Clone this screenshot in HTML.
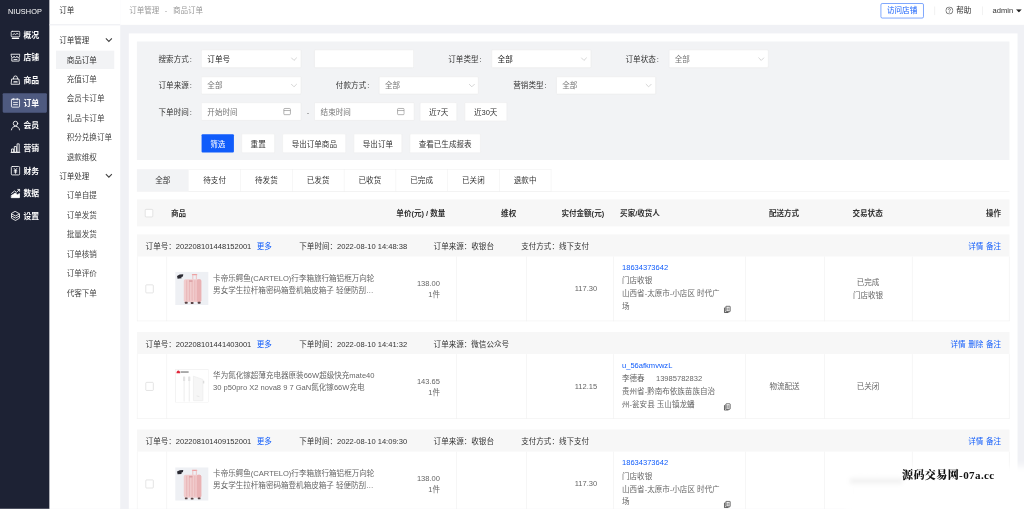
<!DOCTYPE html>
<html lang="zh-CN"><head><meta charset="utf-8"><title>商品订单</title>
<style>
html,body{margin:0;padding:0}
body{width:1024px;height:509px;overflow:hidden;background:#f0f1f5}
#root{filter:saturate(1.001);position:absolute;left:0;top:0;width:1900px;height:945px;transform:scale(0.53895);transform-origin:0 0;font-family:"Liberation Sans","Noto Sans CJK SC",sans-serif;font-size:14px;color:#333;overflow:hidden}
.a{position:absolute;display:block}
.t{white-space:nowrap}
</style></head><body><div id="root">
<div class="a " style="left:0.0px;top:0.0px;width:92.03px;height:944.43px;background:#1d2234"></div>
<div class="a t " style="left:-153.61px;width:400px;text-align:center;top:12.08px;line-height:20px;color:#fff;font-size:13.6px;letter-spacing:.2px">NIUSHOP</div>
<svg class="a" style="left:18.74px;top:55.34px" width="19.5" height="19.5" viewBox="0 0 16 16" fill="none" stroke="#fff" stroke-width="1.300" stroke-linejoin="round" stroke-linecap="round"><rect x="1.400" y="2.600" width="13.200" height="8.400" rx="1.500"/><path d="M4 7.400l2.200-1.200 2 1.200 2-1.600 1.800.800"/><path d="M3.200 13.300h9.600" stroke-width="1.800"/></svg>
<div class="a t " style="left:43.42px;top:54.94px;line-height:20px;color:#fff;font-weight:700;font-size:14.5px">概况</div>
<svg class="a" style="left:18.74px;top:97.32px" width="19.5" height="19.5" viewBox="0 0 16 16" fill="none" stroke="#fff" stroke-width="1.300" stroke-linejoin="round" stroke-linecap="round"><path d="M1.600 3h12.800v3a2.130 2 0 0 1-4.270 0 2.130 2 0 0 1-4.260 0 2.130 2 0 0 1-4.270 0z"/><path d="M2.400 8.600v4.800h11.200V8.600"/><path d="M5.600 11h4.800"/></svg>
<div class="a t " style="left:43.42px;top:96.92px;line-height:20px;color:#fff;font-weight:700;font-size:14.5px">店铺</div>
<svg class="a" style="left:18.74px;top:139.30px" width="19.5" height="19.5" viewBox="0 0 16 16" fill="none" stroke="#fff" stroke-width="1.300" stroke-linejoin="round" stroke-linecap="round"><path d="M2.800 6.200h10.400l1 8H1.800z"/><path d="M5 6V4.600a3 3 0 0 1 6 0V6"/><path d="M5.600 10.600h4.800" stroke-width="2"/></svg>
<div class="a t " style="left:43.42px;top:138.90px;line-height:20px;color:#fff;font-weight:700;font-size:14.5px">商品</div>
<div class="a " style="left:5.1px;top:172.56px;width:81.92px;height:36.37px;background:#4e5a80;border-radius:2px"></div>
<svg class="a" style="left:18.74px;top:181.28px" width="19.5" height="19.5" viewBox="0 0 16 16" fill="none" stroke="#fff" stroke-width="1.300" stroke-linejoin="round" stroke-linecap="round"><rect x="1.800" y="2.600" width="12.400" height="12" rx="1.200"/><path d="M5.400 1.200v2.400M10.600 1.200v2.400M5 7.400h6M5 10.800h6"/></svg>
<div class="a t " style="left:43.42px;top:180.88px;line-height:20px;color:#fff;font-weight:700;font-size:14.5px">订单</div>
<svg class="a" style="left:18.74px;top:223.26px" width="19.5" height="19.5" viewBox="0 0 16 16" fill="none" stroke="#fff" stroke-width="1.300" stroke-linejoin="round" stroke-linecap="round"><circle cx="8" cy="5" r="3.400"/><path d="M1.800 14.800c.6-3.400 2.800-5.400 6.200-5.400s5.600 2 6.200 5.400"/></svg>
<div class="a t " style="left:43.42px;top:222.86px;line-height:20px;color:#fff;font-weight:700;font-size:14.5px">会员</div>
<svg class="a" style="left:18.74px;top:265.24px" width="19.5" height="19.5" viewBox="0 0 16 16" fill="none" stroke="#fff" stroke-width="1.300" stroke-linejoin="round" stroke-linecap="round"><path d="M1 14.600h14"/><rect x="2.600" y="9.400" width="2.600" height="5"/><rect x="6.800" y="5.600" width="2.600" height="8.800"/><rect x="11" y="1.600" width="2.600" height="12.800"/></svg>
<div class="a t " style="left:43.42px;top:264.84px;line-height:20px;color:#fff;font-weight:700;font-size:14.5px">营销</div>
<svg class="a" style="left:18.74px;top:307.22px" width="19.5" height="19.5" viewBox="0 0 16 16" fill="none" stroke="#fff" stroke-width="1.300" stroke-linejoin="round" stroke-linecap="round"><rect x="1.600" y="1.600" width="12.800" height="12.800" rx="1.600"/><path d="M6 4.600l2 2.600 2-2.600M8 7.200V12M6 8h4M6 10h4" stroke-width="1.300"/></svg>
<div class="a t " style="left:43.42px;top:306.82px;line-height:20px;color:#fff;font-weight:700;font-size:14.5px">财务</div>
<svg class="a" style="left:18.74px;top:349.20px" width="19.5" height="19.5" viewBox="0 0 16 16" fill="none" stroke="#fff" stroke-width="1.300" stroke-linejoin="round" stroke-linecap="round"><path d="M2 14.600h12V8.200l-3 2.200-3-3-6 3.800z" fill="#fff"/><path d="M2 8l4.600-3.600 3 2L14 2.400"/><path d="M11.400 2h3v3" /></svg>
<div class="a t " style="left:43.42px;top:348.80px;line-height:20px;color:#fff;font-weight:700;font-size:14.5px">数据</div>
<svg class="a" style="left:18.74px;top:391.18px" width="19.5" height="19.5" viewBox="0 0 16 16" fill="none" stroke="#fff" stroke-width="1.300" stroke-linejoin="round" stroke-linecap="round"><path d="M8 1.200l6 3.400v6.800l-6 3.400-6-3.400V4.600z"/><path d="M2.400 5l5.600 3 5.600-3M2.400 8.200l5.600 3 5.600-3" stroke-width="1.300"/></svg>
<div class="a t " style="left:43.42px;top:390.78px;line-height:20px;color:#fff;font-weight:700;font-size:14.5px">设置</div>
<div class="a " style="left:92.03px;top:0.0px;width:131.18px;height:944.43px;background:#fff"></div>
<div class="a " style="left:92.03px;top:45.46px;width:131.18px;height:1.11px;background:#eceef2"></div>
<div class="a t " style="left:109.84px;top:9.67px;line-height:20px;color:#333;font-size:14px">订单</div>
<div class="a t " style="left:109.84px;top:64.59px;line-height:20px;color:#333">订单管理</div>
<svg class="a" style="left:195.06px;top:66.85px" width="14" height="14" viewBox="0 0 10 10" fill="none" stroke="#444" stroke-width="1.5"><path d="M1 3l4 4 4-4"/></svg>
<div class="a " style="left:103.91px;top:94.26px;width:108.36px;height:33.77px;background:#f2f3f5"></div>
<div class="a t " style="left:123.76px;top:101.33px;line-height:20px;color:#333">商品订单</div>
<div class="a t " style="left:123.76px;top:137.32px;line-height:20px;color:#454545">充值订单</div>
<div class="a t " style="left:123.76px;top:172.95px;line-height:20px;color:#454545">会员卡订单</div>
<div class="a t " style="left:123.76px;top:208.76px;line-height:20px;color:#454545">礼品卡订单</div>
<div class="a t " style="left:123.76px;top:244.94px;line-height:20px;color:#454545">积分兑换订单</div>
<div class="a t " style="left:123.76px;top:280.94px;line-height:20px;color:#454545">退款维权</div>
<div class="a t " style="left:109.84px;top:316.93px;line-height:20px;color:#333">订单处理</div>
<svg class="a" style="left:195.06px;top:319.19px" width="14" height="14" viewBox="0 0 10 10" fill="none" stroke="#444" stroke-width="1.5"><path d="M1 3l4 4 4-4"/></svg>
<div class="a t " style="left:123.76px;top:352.93px;line-height:20px;color:#454545">订单自提</div>
<div class="a t " style="left:123.76px;top:389.11px;line-height:20px;color:#454545">订单发货</div>
<div class="a t " style="left:123.76px;top:425.29px;line-height:20px;color:#454545">批量发货</div>
<div class="a t " style="left:123.76px;top:461.47px;line-height:20px;color:#454545">订单核销</div>
<div class="a t " style="left:123.76px;top:497.65px;line-height:20px;color:#454545">订单评价</div>
<div class="a t " style="left:123.76px;top:533.84px;line-height:20px;color:#454545">代客下单</div>
<div class="a " style="left:223.21px;top:0.0px;width:1676.78px;height:46.2px;background:#fff"></div>
<div class="a t " style="left:239.73px;top:9.67px;line-height:20px;color:#999">订单管理<span style="margin:0 10.500px 0 10px">-</span>商品订单</div>
<div class="a " style="left:1633.55px;top:5.94px;width:80.53px;height:28.2px;border:1.500px solid #105cfb;border-radius:3px;box-sizing:border-box"></div>
<div class="a t " style="left:1473.81px;width:400px;text-align:center;top:9.85px;line-height:20px;color:#105cfb">访问店铺</div>
<div class="a " style="left:1733.74px;top:12.06px;width:0.93px;height:15.77px;background:#e6e6e6"></div>
<svg class="a" style="left:1753.97px;top:11.80px" width="15" height="15" viewBox="0 0 15 15" fill="none" stroke="#333" stroke-width="1.150"><circle cx="7.500" cy="7.500" r="6.500"/><path d="M5.500 6a2 2 0 1 1 3 1.700c-.7.400-1 .8-1 1.600" /><path d="M7.500 10.600v1.200"/></svg>
<div class="a t " style="left:1774.38px;top:9.85px;line-height:20px;color:#333">帮助</div>
<div class="a " style="left:1822.25px;top:12.06px;width:0.93px;height:15.77px;background:#e6e6e6"></div>
<div class="a t " style="left:1841.73px;top:9.67px;line-height:20px;color:#333">admin</div>
<svg class="a" style="left:1884.78px;top:17.04px" width="11" height="6" viewBox="0 0 11 6"><path d="M0 0h11L5.500 6z" fill="#222"/></svg>
<div class="a" style="left:223.58px;top:45.46px;width:1676.41px;height:898.97px;background:#f0f1f5;z-index:-1"></div>
<div class="a " style="left:239.35px;top:61.6px;width:1648.76px;height:882.83px;background:#fff"></div>
<div class="a " style="left:254.2px;top:77.0px;width:1618.52px;height:220.24px;background:#f2f3f5"></div>
<div class="a t " style="left:-43.00999999999999px;width:400px;text-align:right;top:100.12px;line-height:20px;color:#333;letter-spacing:.15px">搜索方式<span style="margin-left:1.500px;letter-spacing:1px">:</span></div>
<div class="a " style="left:373.34px;top:91.96px;width:185.69px;height:34.1px;background:#fff;border:1px solid #e9e9e9;box-sizing:border-box;border-radius:2px"></div>
<div class="a t " style="left:384.73px;top:100.12px;line-height:20px;color:#222">订单号</div>
<svg class="a" style="left:539.28px;top:102.88px" width="13" height="13" viewBox="0 0 10 10" fill="none" stroke="#c9c9c9" stroke-width="1.1"><path d="M1 3l4 4 4-4"/></svg>
<div class="a " style="left:583.47px;top:91.96px;width:184.4px;height:34.1px;background:#fff;border:1px solid #e9e9e9;box-sizing:border-box;border-radius:2px"></div>
<div class="a t " style="left:494.52px;width:400px;text-align:right;top:100.12px;line-height:20px;color:#333;letter-spacing:.15px">订单类型<span style="margin-left:1.500px;letter-spacing:1px">:</span></div>
<div class="a " style="left:911.88px;top:91.96px;width:185.32px;height:34.1px;background:#fff;border:1px solid #e9e9e9;box-sizing:border-box;border-radius:2px"></div>
<div class="a t " style="left:923.28px;top:100.12px;line-height:20px;color:#222">全部</div>
<svg class="a" style="left:1077.46px;top:102.88px" width="13" height="13" viewBox="0 0 10 10" fill="none" stroke="#c9c9c9" stroke-width="1.1"><path d="M1 3l4 4 4-4"/></svg>
<div class="a t " style="left:823.49px;width:400px;text-align:right;top:100.12px;line-height:20px;color:#333;letter-spacing:.15px">订单状态<span style="margin-left:1.500px;letter-spacing:1px">:</span></div>
<div class="a " style="left:1240.67px;top:91.96px;width:185.32px;height:34.1px;background:#fff;border:1px solid #e9e9e9;box-sizing:border-box;border-radius:2px"></div>
<div class="a t " style="left:1252.06px;top:100.12px;line-height:20px;color:#757575">全部</div>
<svg class="a" style="left:1406.25px;top:102.88px" width="13" height="13" viewBox="0 0 10 10" fill="none" stroke="#c9c9c9" stroke-width="1.1"><path d="M1 3l4 4 4-4"/></svg>
<div class="a t " style="left:-43.00999999999999px;width:400px;text-align:right;top:148.55px;line-height:20px;color:#333;letter-spacing:.15px">订单来源<span style="margin-left:1.500px;letter-spacing:1px">:</span></div>
<div class="a " style="left:373.34px;top:141.5px;width:185.69px;height:33.73px;background:#fff;border:1px solid #e9e9e9;box-sizing:border-box;border-radius:2px"></div>
<div class="a t " style="left:384.73px;top:148.55px;line-height:20px;color:#757575">全部</div>
<svg class="a" style="left:539.28px;top:152.23px" width="13" height="13" viewBox="0 0 10 10" fill="none" stroke="#c9c9c9" stroke-width="1.1"><path d="M1 3l4 4 4-4"/></svg>
<div class="a t " style="left:286.15px;width:400px;text-align:right;top:148.55px;line-height:20px;color:#333;letter-spacing:.15px">付款方式<span style="margin-left:1.500px;letter-spacing:1px">:</span></div>
<div class="a " style="left:702.77px;top:141.5px;width:185.69px;height:33.73px;background:#fff;border:1px solid #e9e9e9;box-sizing:border-box;border-radius:2px"></div>
<div class="a t " style="left:714.17px;top:148.55px;line-height:20px;color:#757575">全部</div>
<svg class="a" style="left:868.72px;top:152.23px" width="13" height="13" viewBox="0 0 10 10" fill="none" stroke="#c9c9c9" stroke-width="1.1"><path d="M1 3l4 4 4-4"/></svg>
<div class="a t " style="left:615.12px;width:400px;text-align:right;top:148.55px;line-height:20px;color:#333;letter-spacing:.15px">营销类型<span style="margin-left:1.500px;letter-spacing:1px">:</span></div>
<div class="a " style="left:1031.75px;top:141.5px;width:185.32px;height:33.73px;background:#fff;border:1px solid #e9e9e9;box-sizing:border-box;border-radius:2px"></div>
<div class="a t " style="left:1043.14px;top:148.55px;line-height:20px;color:#757575">全部</div>
<svg class="a" style="left:1197.32px;top:152.23px" width="13" height="13" viewBox="0 0 10 10" fill="none" stroke="#c9c9c9" stroke-width="1.1"><path d="M1 3l4 4 4-4"/></svg>
<div class="a t " style="left:-43.00999999999999px;width:400px;text-align:right;top:198.18px;line-height:20px;color:#333;letter-spacing:.15px">下单时间<span style="margin-left:1.500px;letter-spacing:1px">:</span></div>
<div class="a " style="left:373.34px;top:190.11px;width:185.69px;height:33.92px;background:#fff;border:1px solid #e9e9e9;box-sizing:border-box;border-radius:2px"></div>
<div class="a t " style="left:384.73px;top:198.18px;line-height:20px;color:#757575">开始时间</div>
<svg class="a" style="left:525.37px;top:199.47px" width="15.5" height="15.5" viewBox="0 0 14 14" fill="none" stroke="#8a8a8a" stroke-width="1.100"><rect x="1.500" y="2" width="11" height="10.500" rx="1.500"/><path d="M1.500 5.500h11"/></svg>
<div class="a t " style="left:371.48px;width:400px;text-align:center;top:198.18px;line-height:20px;color:#666">-</div>
<div class="a " style="left:583.47px;top:190.11px;width:185.69px;height:33.92px;background:#fff;border:1px solid #e9e9e9;box-sizing:border-box;border-radius:2px"></div>
<div class="a t " style="left:594.86px;top:198.18px;line-height:20px;color:#757575">结束时间</div>
<svg class="a" style="left:735.5px;top:199.47px" width="15.5" height="15.5" viewBox="0 0 14 14" fill="none" stroke="#8a8a8a" stroke-width="1.100"><rect x="1.500" y="2" width="11" height="10.500" rx="1.500"/><path d="M1.500 5.500h11"/></svg>
<div class="a " style="left:779.11px;top:189.63px;width:69.21px;height:34.88px;background:#fff;border:1px solid #ececec;box-sizing:border-box;border-radius:2px"></div>
<div class="a t " style="left:613.71px;width:400px;text-align:center;top:198.37px;line-height:20px;color:#333">近7天</div>
<div class="a " style="left:861.68px;top:189.63px;width:78.86px;height:34.88px;background:#fff;border:1px solid #ececec;box-sizing:border-box;border-radius:2px"></div>
<div class="a t " style="left:701.1px;width:400px;text-align:center;top:198.37px;line-height:20px;color:#333">近30天</div>
<div class="a " style="left:373.88px;top:248.63px;width:60.3px;height:34.33px;background:#105cfb;border-radius:2px"></div>
<div class="a t " style="left:204.02999999999997px;width:400px;text-align:center;top:257.09px;line-height:20px;color:#fff">筛选</div>
<div class="a " style="left:447.91px;top:248.07px;width:62.16px;height:35.44px;background:#fff;border:1px solid #ececec;box-sizing:border-box;border-radius:2px"></div>
<div class="a t " style="left:278.99px;width:400px;text-align:center;top:257.09px;line-height:20px;color:#333">重置</div>
<div class="a " style="left:523.98px;top:248.07px;width:118.38px;height:35.44px;background:#fff;border:1px solid #ececec;box-sizing:border-box;border-radius:2px"></div>
<div class="a t " style="left:383.16999999999996px;width:400px;text-align:center;top:257.09px;line-height:20px;color:#333">导出订单商品</div>
<div class="a " style="left:656.09px;top:248.07px;width:90.18px;height:35.44px;background:#fff;border:1px solid #ececec;box-sizing:border-box;border-radius:2px"></div>
<div class="a t " style="left:501.17999999999995px;width:400px;text-align:center;top:257.09px;line-height:20px;color:#333">导出订单</div>
<div class="a " style="left:759.63px;top:248.07px;width:132.67px;height:35.44px;background:#fff;border:1px solid #ececec;box-sizing:border-box;border-radius:2px"></div>
<div class="a t " style="left:625.96px;width:400px;text-align:center;top:257.09px;line-height:20px;color:#333">查看已生成报表</div>
<div class="a " style="left:254.2px;top:354.76px;width:1618.52px;height:1.02px;background:#eee"></div>
<div class="a " style="left:254.2px;top:313.57px;width:96.02px;height:41.75px;background:#f2f3f5"></div>
<div class="a t " style="left:102.20999999999998px;width:400px;text-align:center;top:324.72px;line-height:20px;color:#333">全部</div>
<div class="a " style="left:350.22px;top:313.57px;width:96.58px;height:42.21px;border:1px solid #f0f0f0;border-left:0;box-sizing:border-box"></div>
<div class="a t " style="left:198.23000000000002px;width:400px;text-align:center;top:324.72px;line-height:20px;color:#333">待支付</div>
<div class="a " style="left:446.24px;top:313.57px;width:96.58px;height:42.21px;border:1px solid #f0f0f0;border-left:0;box-sizing:border-box"></div>
<div class="a t " style="left:294.25px;width:400px;text-align:center;top:324.72px;line-height:20px;color:#333">待发货</div>
<div class="a " style="left:542.26px;top:313.57px;width:96.58px;height:42.21px;border:1px solid #f0f0f0;border-left:0;box-sizing:border-box"></div>
<div class="a t " style="left:390.27px;width:400px;text-align:center;top:324.72px;line-height:20px;color:#333">已发货</div>
<div class="a " style="left:638.28px;top:313.57px;width:96.58px;height:42.21px;border:1px solid #f0f0f0;border-left:0;box-sizing:border-box"></div>
<div class="a t " style="left:486.28999999999996px;width:400px;text-align:center;top:324.72px;line-height:20px;color:#333">已收货</div>
<div class="a " style="left:734.3px;top:313.57px;width:96.58px;height:42.21px;border:1px solid #f0f0f0;border-left:0;box-sizing:border-box"></div>
<div class="a t " style="left:582.31px;width:400px;text-align:center;top:324.72px;line-height:20px;color:#333">已完成</div>
<div class="a " style="left:830.32px;top:313.57px;width:96.58px;height:42.21px;border:1px solid #f0f0f0;border-left:0;box-sizing:border-box"></div>
<div class="a t " style="left:678.33px;width:400px;text-align:center;top:324.72px;line-height:20px;color:#333">已关闭</div>
<div class="a " style="left:926.34px;top:313.57px;width:96.58px;height:42.21px;border:1px solid #f0f0f0;border-left:0;box-sizing:border-box"></div>
<div class="a t " style="left:774.35px;width:400px;text-align:center;top:324.72px;line-height:20px;color:#333">退款中</div>
<div class="a " style="left:254.2px;top:369.98px;width:1618.52px;height:50.28px;background:#f7f7f7"></div>
<div class="a " style="left:269.04px;top:387.88px;width:15.4px;height:15.4px;background:#fff;border:1px solid #cfcfcf;box-sizing:border-box;border-radius:2px"></div>
<div class="a t " style="left:317.1px;top:385.40px;line-height:20px;color:#333;font-weight:700">商品</div>
<div class="a t " style="left:426.41999999999996px;width:400px;text-align:right;top:385.40px;line-height:20px;color:#333;font-weight:700">单价(元) / 数量</div>
<div class="a t " style="left:557.79px;width:400px;text-align:right;top:385.40px;line-height:20px;color:#333;font-weight:700">维权</div>
<div class="a t " style="left:721.0699999999999px;width:400px;text-align:right;top:385.40px;line-height:20px;color:#333;font-weight:700">实付金额(元)</div>
<div class="a t " style="left:1150.57px;top:385.40px;line-height:20px;color:#333;font-weight:700">买家/收货人</div>
<div class="a t " style="left:1254.68px;width:400px;text-align:center;top:385.40px;line-height:20px;color:#333;font-weight:700">配送方式</div>
<div class="a t " style="left:1409.8px;width:400px;text-align:center;top:385.40px;line-height:20px;color:#333;font-weight:700">交易状态</div>
<div class="a t " style="left:1457.5px;width:400px;text-align:right;top:385.40px;line-height:20px;color:#333;font-weight:700">操作</div>
<div class="a " style="left:254.2px;top:435.01px;width:1618.52px;height:40.82px;background:#f7f7f7"></div>
<div class="a t " style="left:270.15px;top:447.19px;line-height:20px;color:#333">订单号：202208101448152001</div>
<div class="a t " style="left:476.48px;top:447.19px;line-height:20px;color:#105cfb">更多</div>
<div class="a t " style="left:555.34px;top:447.19px;line-height:20px;color:#333">下单时间：2022-08-10 14:48:38</div>
<div class="a t " style="left:804.53px;top:447.19px;line-height:20px;color:#333">订单来源：收银台</div>
<div class="a t " style="left:967.07px;top:447.19px;line-height:20px;color:#333">支付方式：线下支付</div>
<div class="a t " style="left:1457.5px;width:400px;text-align:right;top:447.19px;line-height:20px;color:#105cfb;word-spacing:1px">详情 备注</div>
<div class="a " style="left:254.2px;top:475.83px;width:1618.52px;height:120.05px;border:1px solid #eeeeee;border-top:0;box-sizing:border-box"></div>
<div class="a " style="left:308.9px;top:475.83px;width:1.0px;height:120.05px;background:#eeeeee"></div>
<div class="a " style="left:846.52px;top:475.83px;width:1.0px;height:120.05px;background:#eeeeee"></div>
<div class="a " style="left:976.4px;top:475.83px;width:1.0px;height:120.05px;background:#eeeeee"></div>
<div class="a " style="left:1138.01px;top:475.83px;width:1.0px;height:120.05px;background:#eeeeee"></div>
<div class="a " style="left:1382.74px;top:475.83px;width:1.0px;height:120.05px;background:#eeeeee"></div>
<div class="a " style="left:1529.14px;top:475.83px;width:1.0px;height:120.05px;background:#eeeeee"></div>
<div class="a " style="left:1692.05px;top:475.83px;width:1.0px;height:120.05px;background:#eeeeee"></div>
<div class="a " style="left:269.78px;top:528.25px;width:15.4px;height:15.4px;background:#fff;border:1px solid #cfcfcf;box-sizing:border-box;border-radius:2px"></div>
<div class="a" style="left:325px;top:504px;width:62px;height:62px"><svg width="62" height="62" viewBox="0 0 62 62"><rect width="62" height="62" fill="#eef0f4"/><path d="M3.500 8l5-2.500 6.500-.5-.5 4-3 1 .5 2.500-7.500.5z" fill="#2b2b33"/><rect x="31" y="4.500" width="10" height="2.200" rx="1" fill="#ec9fa0"/><rect x="32" y="5.500" width="1.600" height="9" fill="#efb9ba"/><rect x="38.400" y="5.500" width="1.600" height="9" fill="#efb9ba"/><rect x="16" y="14" width="32.500" height="42.500" rx="3.500" fill="#f1cccd"/><rect x="40" y="14" width="8.500" height="42.500" rx="3" fill="#e9b2b4"/><path d="M21.500 16v38M26.500 16v38M31.500 16v38M36.500 16v38" stroke="#e6aeb1" stroke-width="1.400"/><rect x="26" y="16" width="6" height="3" fill="#dca0a4"/><rect x="18" y="56" width="5" height="3.500" rx="1" fill="#5a4446"/><rect x="29" y="56.500" width="5" height="3.500" rx="1" fill="#5a4446"/><rect x="42" y="56" width="5" height="3.500" rx="1" fill="#5a4446"/></svg></div>
<div class="a t " style="left:395.4px;top:505.91px;line-height:20px;color:#666;white-space:nowrap">卡帝乐鳄鱼(CARTELO)行李箱旅行箱铝框万向轮</div>
<div class="a t " style="left:395.4px;top:528.18px;line-height:20px;color:#666;white-space:nowrap">男女学生拉杆箱密码箱登机箱皮箱子 轻便防刮…</div>
<div class="a t " style="left:416.4px;width:400px;text-align:right;top:515.93px;line-height:20px;color:#666">138.00</div>
<div class="a t " style="left:416.4px;width:400px;text-align:right;top:535.78px;line-height:20px;color:#666">1件</div>
<div class="a t " style="left:708.0799999999999px;width:400px;text-align:right;top:524.84px;line-height:20px;color:#666">117.30</div>
<div class="a t " style="left:1154.1px;top:486.43px;line-height:20px;color:#105cfb;white-space:nowrap">18634373642</div>
<div class="a t " style="left:1154.1px;top:510.73px;line-height:20px;color:#666;white-space:nowrap">门店收银</div>
<div class="a t " style="left:1154.1px;top:535.04px;line-height:20px;color:#666;white-space:nowrap">山西省-太原市-小店区 时代广</div>
<div class="a t " style="left:1154.1px;top:559.35px;line-height:20px;color:#666;white-space:nowrap">场</div>
<div class="a" style="left:1343.35px;top:566.93px"><svg width="13" height="14" viewBox="0 0 12 13" fill="none" stroke="#333" stroke-width="1.400"><rect x="3.500" y="1" width="7.500" height="9.500" rx="1"/><path d="M1 3.500v8.500h7"/><path d="M5.500 3.500v5M8.500 3.500v5" stroke-width="1"/></svg></div>
<div class="a t " style="left:1410.54px;width:400px;text-align:center;top:513.33px;line-height:20px;color:#666">已完成</div>
<div class="a t " style="left:1410.54px;width:400px;text-align:center;top:536.71px;line-height:20px;color:#666">门店收银</div>
<div class="a " style="left:254.2px;top:616.01px;width:1618.52px;height:40.82px;background:#f7f7f7"></div>
<div class="a t " style="left:270.15px;top:627.54px;line-height:20px;color:#333">订单号：202208101441403001</div>
<div class="a t " style="left:476.48px;top:627.54px;line-height:20px;color:#105cfb">更多</div>
<div class="a t " style="left:555.34px;top:627.54px;line-height:20px;color:#333">下单时间：2022-08-10 14:41:32</div>
<div class="a t " style="left:804.53px;top:627.54px;line-height:20px;color:#333">订单来源：微信公众号</div>
<div class="a t " style="left:1457.5px;width:400px;text-align:right;top:627.54px;line-height:20px;color:#105cfb;word-spacing:1px">详情 删除 备注</div>
<div class="a " style="left:254.2px;top:656.83px;width:1618.52px;height:120.05px;border:1px solid #eeeeee;border-top:0;box-sizing:border-box"></div>
<div class="a " style="left:308.9px;top:656.83px;width:1.0px;height:120.05px;background:#eeeeee"></div>
<div class="a " style="left:846.52px;top:656.83px;width:1.0px;height:120.05px;background:#eeeeee"></div>
<div class="a " style="left:976.4px;top:656.83px;width:1.0px;height:120.05px;background:#eeeeee"></div>
<div class="a " style="left:1138.01px;top:656.83px;width:1.0px;height:120.05px;background:#eeeeee"></div>
<div class="a " style="left:1382.74px;top:656.83px;width:1.0px;height:120.05px;background:#eeeeee"></div>
<div class="a " style="left:1529.14px;top:656.83px;width:1.0px;height:120.05px;background:#eeeeee"></div>
<div class="a " style="left:1692.05px;top:656.83px;width:1.0px;height:120.05px;background:#eeeeee"></div>
<div class="a " style="left:269.78px;top:709.25px;width:15.4px;height:15.4px;background:#fff;border:1px solid #cfcfcf;box-sizing:border-box;border-radius:2px"></div>
<div class="a" style="left:325px;top:685px;width:62px;height:62px"><svg width="62" height="62" viewBox="0 0 62 62"><rect x=".5" y=".5" width="61" height="61" fill="#fff" stroke="#e4e4e4"/><path d="M2.500 7.500c0-3 1.500-5 3.400-5s3.400 2 3.400 5z" fill="#e0273a"/><rect x="10" y="3.800" width="15" height="3" fill="#9a9a9a"/><rect x="15.700" y="18" width="1.800" height="42" fill="#ececec"/><rect x="25.200" y="18" width="1.800" height="42" fill="#ececec"/><rect x="14.600" y="13.500" width="4" height="8.500" rx="1" fill="#e3e3e3"/><rect x="24.100" y="13.500" width="4" height="8.500" rx="1" fill="#e3e3e3"/><path d="M34 13l17.500 6v39.500H34z" fill="#f6f6f6" stroke="#e9e9e9"/><rect x="51.500" y="21.500" width="2.500" height="5" fill="#dcdcdc"/><path d="M40 49.500l5 1.500" stroke="#ddd" stroke-width="1.200"/></svg></div>
<div class="a t " style="left:395.4px;top:686.91px;line-height:20px;color:#666;white-space:nowrap">华为氮化镓超薄充电器原装66W超级快充mate40</div>
<div class="a t " style="left:395.4px;top:709.18px;line-height:20px;color:#666;white-space:nowrap">30 p50pro X2 nova8 9 7 GaN氮化镓66W充电</div>
<div class="a t " style="left:416.4px;width:400px;text-align:right;top:696.93px;line-height:20px;color:#666">143.65</div>
<div class="a t " style="left:416.4px;width:400px;text-align:right;top:716.78px;line-height:20px;color:#666">1件</div>
<div class="a t " style="left:708.0799999999999px;width:400px;text-align:right;top:705.84px;line-height:20px;color:#666">112.15</div>
<div class="a t " style="left:1154.1px;top:667.43px;line-height:20px;color:#105cfb;white-space:nowrap">u_56afkmvwzL</div>
<div class="a t " style="left:1154.1px;top:691.73px;line-height:20px;color:#666;white-space:nowrap">李德春<span style="margin-left:21px">13985782832</span></div>
<div class="a t " style="left:1154.1px;top:716.04px;line-height:20px;color:#666;white-space:nowrap">贵州省-黔南布依族苗族自治</div>
<div class="a t " style="left:1154.1px;top:740.35px;line-height:20px;color:#666;white-space:nowrap">州-瓮安县 玉山镇龙蟠</div>
<div class="a" style="left:1343.35px;top:747.93px"><svg width="13" height="14" viewBox="0 0 12 13" fill="none" stroke="#333" stroke-width="1.400"><rect x="3.500" y="1" width="7.500" height="9.500" rx="1"/><path d="M1 3.500v8.500h7"/><path d="M5.500 3.500v5M8.500 3.500v5" stroke-width="1"/></svg></div>
<div class="a t " style="left:1255.61px;width:400px;text-align:center;top:705.84px;line-height:20px;color:#666">物流配送</div>
<div class="a t " style="left:1410.54px;width:400px;text-align:center;top:705.84px;line-height:20px;color:#666">已关闭</div>
<div class="a " style="left:254.2px;top:797.01px;width:1618.52px;height:40.82px;background:#f7f7f7"></div>
<div class="a t " style="left:270.15px;top:808.54px;line-height:20px;color:#333">订单号：202208101409152001</div>
<div class="a t " style="left:476.48px;top:808.54px;line-height:20px;color:#105cfb">更多</div>
<div class="a t " style="left:555.34px;top:808.54px;line-height:20px;color:#333">下单时间：2022-08-10 14:09:30</div>
<div class="a t " style="left:804.53px;top:808.54px;line-height:20px;color:#333">订单来源：收银台</div>
<div class="a t " style="left:967.07px;top:808.54px;line-height:20px;color:#333">支付方式：线下支付</div>
<div class="a t " style="left:1457.5px;width:400px;text-align:right;top:808.54px;line-height:20px;color:#105cfb;word-spacing:1px">详情 备注</div>
<div class="a " style="left:254.2px;top:837.83px;width:1618.52px;height:120.05px;border:1px solid #eeeeee;border-top:0;box-sizing:border-box"></div>
<div class="a " style="left:308.9px;top:837.83px;width:1.0px;height:120.05px;background:#eeeeee"></div>
<div class="a " style="left:846.52px;top:837.83px;width:1.0px;height:120.05px;background:#eeeeee"></div>
<div class="a " style="left:976.4px;top:837.83px;width:1.0px;height:120.05px;background:#eeeeee"></div>
<div class="a " style="left:1138.01px;top:837.83px;width:1.0px;height:120.05px;background:#eeeeee"></div>
<div class="a " style="left:1382.74px;top:837.83px;width:1.0px;height:120.05px;background:#eeeeee"></div>
<div class="a " style="left:1529.14px;top:837.83px;width:1.0px;height:120.05px;background:#eeeeee"></div>
<div class="a " style="left:1692.05px;top:837.83px;width:1.0px;height:120.05px;background:#eeeeee"></div>
<div class="a " style="left:269.78px;top:890.25px;width:15.4px;height:15.4px;background:#fff;border:1px solid #cfcfcf;box-sizing:border-box;border-radius:2px"></div>
<div class="a" style="left:325px;top:867px;width:62px;height:62px"><svg width="62" height="62" viewBox="0 0 62 62"><rect width="62" height="62" fill="#eef0f4"/><path d="M3.500 8l5-2.500 6.500-.5-.5 4-3 1 .5 2.500-7.500.5z" fill="#2b2b33"/><rect x="31" y="4.500" width="10" height="2.200" rx="1" fill="#ec9fa0"/><rect x="32" y="5.500" width="1.600" height="9" fill="#efb9ba"/><rect x="38.400" y="5.500" width="1.600" height="9" fill="#efb9ba"/><rect x="16" y="14" width="32.500" height="42.500" rx="3.500" fill="#f1cccd"/><rect x="40" y="14" width="8.500" height="42.500" rx="3" fill="#e9b2b4"/><path d="M21.500 16v38M26.500 16v38M31.500 16v38M36.500 16v38" stroke="#e6aeb1" stroke-width="1.400"/><rect x="26" y="16" width="6" height="3" fill="#dca0a4"/><rect x="18" y="56" width="5" height="3.500" rx="1" fill="#5a4446"/><rect x="29" y="56.500" width="5" height="3.500" rx="1" fill="#5a4446"/><rect x="42" y="56" width="5" height="3.500" rx="1" fill="#5a4446"/></svg></div>
<div class="a t " style="left:395.4px;top:867.91px;line-height:20px;color:#666;white-space:nowrap">卡帝乐鳄鱼(CARTELO)行李箱旅行箱铝框万向轮</div>
<div class="a t " style="left:395.4px;top:890.18px;line-height:20px;color:#666;white-space:nowrap">男女学生拉杆箱密码箱登机箱皮箱子 轻便防刮…</div>
<div class="a t " style="left:416.4px;width:400px;text-align:right;top:877.93px;line-height:20px;color:#666">138.00</div>
<div class="a t " style="left:416.4px;width:400px;text-align:right;top:897.78px;line-height:20px;color:#666">1件</div>
<div class="a t " style="left:708.0799999999999px;width:400px;text-align:right;top:886.84px;line-height:20px;color:#666">117.30</div>
<div class="a t " style="left:1154.1px;top:848.43px;line-height:20px;color:#105cfb;white-space:nowrap">18634373642</div>
<div class="a t " style="left:1154.1px;top:872.73px;line-height:20px;color:#666;white-space:nowrap">门店收银</div>
<div class="a t " style="left:1154.1px;top:897.04px;line-height:20px;color:#666;white-space:nowrap">山西省-太原市-小店区 时代广</div>
<div class="a t " style="left:1154.1px;top:921.35px;line-height:20px;color:#666;white-space:nowrap">场</div>
<div class="a" style="left:1343.35px;top:928.93px"><svg width="13" height="14" viewBox="0 0 12 13" fill="none" stroke="#333" stroke-width="1.400"><rect x="3.500" y="1" width="7.500" height="9.500" rx="1"/><path d="M1 3.500v8.500h7"/><path d="M5.500 3.500v5M8.500 3.500v5" stroke-width="1"/></svg></div>
<div class="a t " style="left:1410.54px;width:400px;text-align:center;top:875.33px;line-height:20px;color:#666">已完成</div>
<div class="a t " style="left:1410.54px;width:400px;text-align:center;top:898.71px;line-height:20px;color:#666">门店收银</div>
<div class="a" style="left:1569.72px;top:864.64px;width:371.09px;height:111.33px;background:#fff;filter:blur(7px)"></div>
<div class="a" style="left:1577.14px;top:886.91px;width:96.48px;height:11.13px;background:rgba(0,0,0,.05);filter:blur(4px)"></div>
<div class="a t " style="left:1559.53px;width:400px;text-align:center;top:867.34px;line-height:28px;color:#111;font-family:'Liberation Serif','Noto Serif CJK SC',serif;font-weight:900;font-size:20.5px;letter-spacing:.7px">源码交易网-07a.cc</div>
</div></body></html>
